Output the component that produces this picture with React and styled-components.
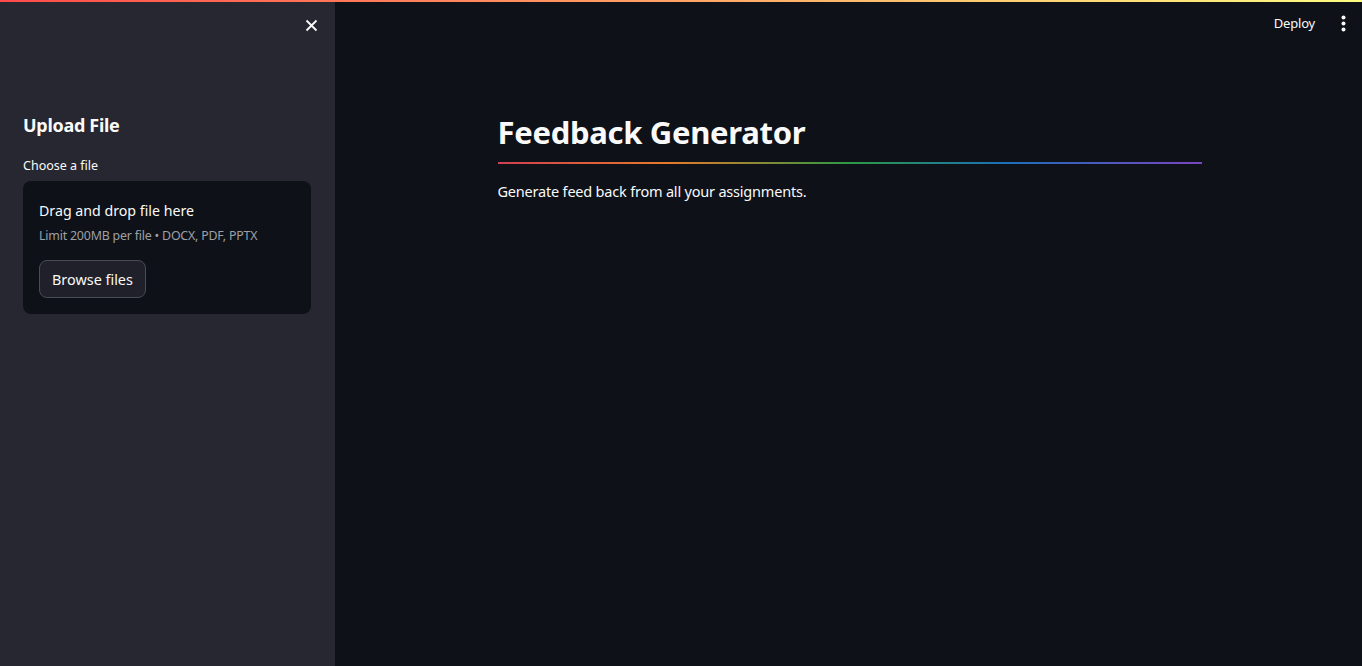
import React from "react";
import styled, { createGlobalStyle } from "styled-components";

const GlobalStyle = createGlobalStyle`
  html, body, #root {
    margin: 0;
    padding: 0;
    height: 100%;
  }
  body {
    background: #0e1117;
    color: #fafafa;
    font-family: "Noto Sans", "Open Sans", sans-serif;
    overflow: hidden;
  }
  * { box-sizing: border-box; }
`;

const Shell = styled.div`
  display: flex;
  height: 666px;
  position: relative;
`;

const Decoration = styled.div`
  position: absolute;
  top: 0;
  left: 0;
  right: 0;
  height: 2px;
  background: linear-gradient(90deg, #ff4b4b, #fffd80);
  z-index: 5;
`;

const Sidebar = styled.aside`
  width: 335px;
  flex-shrink: 0;
  background: #262730;
  display: flex;
  flex-direction: column;
  padding: 0 24px 0 23px;
`;

const SidebarTop = styled.div`
  height: 100px;
  display: flex;
  justify-content: flex-end;
  padding-top: 18px;
`;

const CloseButton = styled.button`
  all: unset;
  width: 14px;
  height: 14px;
  display: flex;
  align-items: center;
  justify-content: center;
  margin-right: -7px;
  color: #fafafa;
`;

const SideHeading = styled.h3`
  margin: 13px 0 0;
  font-size: 18px;
  font-weight: 700;
  letter-spacing: -0.3px;
`;

const Label = styled.label`
  margin-top: 20px;
  font-size: 12.5px;
  display: block;
`;

const Dropzone = styled.section`
  margin-top: 7px;
  background: #0e1117;
  border-radius: 8px;
  padding: 20px 16px 16px;
  display: flex;
  flex-direction: column;
  align-items: flex-start;
`;

const DropTitle = styled.div`
  font-size: 14.2px;
`;

const DropHint = styled.div`
  font-size: 12.4px;
  color: #9ea0a6;
  margin-top: 7px;
  letter-spacing: -0.2px;
`;

const BrowseButton = styled.button`
  margin-top: 16px;
  height: 38px;
  padding: 0 12px;
  border: 1px solid #4a4c55;
  background: #1f2029;
  color: #fafafa;
  border-radius: 8px;
  font-family: inherit;
  font-size: 14.4px;
`;

const Main = styled.main`
  flex: 1;
  display: flex;
  flex-direction: column;
`;

const Header = styled.header`
  height: 48px;
  display: flex;
  align-items: center;
  justify-content: flex-end;
  padding: 0 17px 2px 0;
  gap: 24px;
`;

const Deploy = styled.span`
  font-size: 13px;
  letter-spacing: -0.2px;
  margin-right: 3px;
`;

const Dots = styled.div`
  display: flex;
  flex-direction: column;
  gap: 3px;
  span {
    width: 3px;
    height: 3px;
    border-radius: 50%;
    background: #fafafa;
    box-shadow: 0 0 0 0.5px #fafafa;
  }
`;

const Block = styled.div`
  width: 704px;
  margin: 64px auto 0;
  transform: translateX(1px);
`;

const Title = styled.h1`
  margin: 0;
  font-size: 31px;
  font-weight: 700;
  line-height: 1.3;
  letter-spacing: -0.3px;
`;

const Divider = styled.hr`
  border: none;
  height: 2px;
  margin: 10px 0 0;
  background: linear-gradient(
    90deg,
    #d0404f,
    #e87a2a 24%,
    #2b9a43 50%,
    #1c6fb8 72%,
    #7b45c2
  );
`;

const Text = styled.p`
  margin: 17px 0 0;
  font-size: 14.5px;
  letter-spacing: -0.2px;
`;

export default function App() {
  return (
    <>
      <GlobalStyle />
      <Shell>
        <Decoration />
        <Sidebar>
          <SidebarTop>
            <CloseButton aria-label="close">
              <svg width="13" height="13" viewBox="0 0 13 13">
                <path d="M1.5 1.5 L11.5 11.5 M11.5 1.5 L1.5 11.5" stroke="#fafafa" strokeWidth="1.8" />
              </svg>
            </CloseButton>
          </SidebarTop>
          <SideHeading>Upload File</SideHeading>
          <Label>Choose a file</Label>
          <Dropzone>
            <DropTitle>Drag and drop file here</DropTitle>
            <DropHint>Limit 200MB per file • DOCX, PDF, PPTX</DropHint>
            <BrowseButton>Browse files</BrowseButton>
          </Dropzone>
        </Sidebar>
        <Main>
          <Header>
            <Deploy>Deploy</Deploy>
            <Dots>
              <span />
              <span />
              <span />
            </Dots>
          </Header>
          <Block>
            <Title>Feedback Generator</Title>
            <Divider />
            <Text>Generate feed back from all your assignments.</Text>
          </Block>
        </Main>
      </Shell>
    </>
  );
}
